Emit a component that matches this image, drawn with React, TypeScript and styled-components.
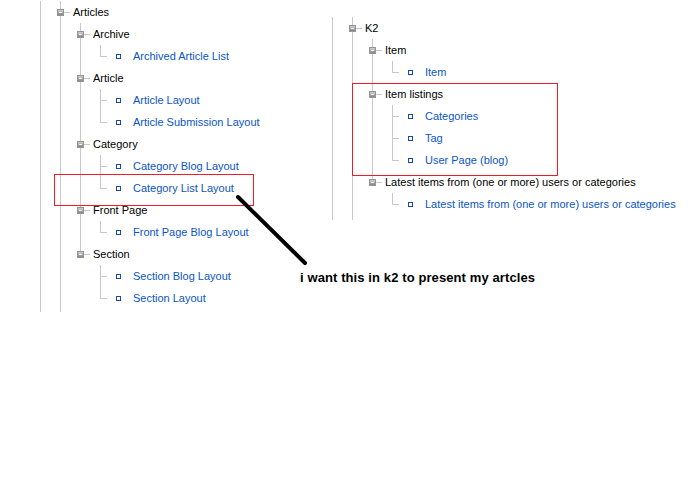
import React from "react";
import styled, { createGlobalStyle } from "styled-components";

type TreeNode = { label: string; children?: TreeNode[] };

const GlobalStyle = createGlobalStyle`
  html, body {
    margin: 0;
    padding: 0;
    background: #fff;
  }
  body {
    font-family: "Liberation Sans", Arial, sans-serif;
  }
`;

const leftTree: TreeNode = {
  label: "Articles",
  children: [
    { label: "Archive", children: [{ label: "Archived Article List" }] },
    {
      label: "Article",
      children: [{ label: "Article Layout" }, { label: "Article Submission Layout" }],
    },
    {
      label: "Category",
      children: [{ label: "Category Blog Layout" }, { label: "Category List Layout" }],
    },
    { label: "Front Page", children: [{ label: "Front Page Blog Layout" }] },
    {
      label: "Section",
      children: [{ label: "Section Blog Layout" }, { label: "Section Layout" }],
    },
  ],
};

const rightTree: TreeNode = {
  label: "K2",
  children: [
    { label: "Item", children: [{ label: "Item" }] },
    {
      label: "Item listings",
      children: [{ label: "Categories" }, { label: "Tag" }, { label: "User Page (blog)" }],
    },
    {
      label: "Latest items from (one or more) users or categories",
      children: [{ label: "Latest items from (one or more) users or categories" }],
    },
  ],
};

const LINE = "#c8c8c8";

const Page = styled.div`
  position: relative;
  width: 697px;
  height: 480px;
  overflow: hidden;
`;

const Columns = styled.div`
  display: flex;
  padding-top: 1px;
`;

const Column = styled.div<{ $width?: number; $top: number }>`
  display: flex;
  flex-direction: column;
  margin-top: ${(p) => p.$top}px;
  ${(p) => (p.$width ? `width: ${p.$width}px; padding-left: 30px; box-sizing: border-box;` : "")}
`;

const Row = styled.div<{ $h?: number }>`
  display: flex;
  align-items: center;
  height: ${(p) => p.$h ?? 22}px;
  font-size: 11px;
  white-space: nowrap;
`;

const Guide = styled.div<{ $on: boolean }>`
  position: relative;
  flex: 0 0 20px;
  align-self: stretch;

  &::before {
    content: "";
    display: ${(p) => (p.$on ? "block" : "none")};
    position: absolute;
    left: 10px;
    top: 0;
    bottom: 0;
    width: 1px;
    background: ${LINE};
  }
`;

const Joint = styled.div<{ $last: boolean }>`
  position: relative;
  flex: 0 0 20px;
  align-self: stretch;

  &::before {
    content: "";
    position: absolute;
    left: 10px;
    top: 0;
    height: 11px;
    width: 1px;
    background: ${LINE};
  }

  &::after {
    content: "";
    display: ${(p) => (p.$last ? "none" : "block")};
    position: absolute;
    left: 10px;
    top: 11px;
    bottom: 0;
    width: 1px;
    background: ${LINE};
  }
`;

const Expander = styled.span`
  position: absolute;
  left: 7px;
  top: 8px;
  width: 7px;
  height: 7px;
  box-sizing: border-box;
  z-index: 1;
  background: linear-gradient(#cfcfcf, #858585);
  border: 1px solid #949494;

  &::after {
    content: "";
    position: absolute;
    left: 1px;
    top: 2px;
    width: 3px;
    height: 1px;
    background: #f2f2f2;
  }
`;

const Dash = styled.span<{ $from: number; $len: number }>`
  position: absolute;
  left: ${(p) => p.$from}px;
  top: 11px;
  width: ${(p) => p.$len}px;
  height: 1px;
  background: ${LINE};
`;

const Heading = styled.span`
  margin-left: 3px;
  color: #000;
`;

const LeafIcon = styled.span`
  flex: 0 0 5px;
  width: 5px;
  height: 5px;
  margin-left: 6px;
  box-sizing: border-box;
  border: 1px solid #1848a8;
  background: #fff;
`;

const Link = styled.a`
  margin-left: 12px;
  color: #0b55c4;
  text-decoration: none;
`;

const RedBox = styled.div<{ $x: number; $y: number; $w: number; $h: number }>`
  position: absolute;
  left: ${(p) => p.$x}px;
  top: ${(p) => p.$y}px;
  width: ${(p) => p.$w}px;
  height: ${(p) => p.$h}px;
  border: 1px solid #ee1c24;
  box-sizing: border-box;
  pointer-events: none;
`;

const Arrow = styled.svg`
  position: absolute;
  left: 0;
  top: 0;
  pointer-events: none;
`;

const Note = styled.div`
  position: absolute;
  left: 300px;
  top: 270px;
  font-size: 13px;
  line-height: 16px;
  font-weight: bold;
  letter-spacing: 0.1px;
  color: #000;
  white-space: nowrap;
`;

function renderRows(node: TreeNode, guides: boolean[], last: boolean, key: string): React.ReactNode[] {
  const kids = node.children;
  const rows: React.ReactNode[] = [
    <Row key={key}>
      {guides.map((g, i) => (
        <Guide key={i} $on={g} />
      ))}
      {kids ? (
        <Joint $last={last}>
          <Expander />
          <Dash $from={14} $len={6} />
        </Joint>
      ) : (
        <Joint $last={last}>
          <Dash $from={10} $len={7} />
        </Joint>
      )}
      {kids ? (
        <Heading>{node.label}</Heading>
      ) : (
        <>
          <LeafIcon />
          <Link href="#">{node.label}</Link>
        </>
      )}
    </Row>,
  ];
  kids?.forEach((c, i) => {
    rows.push(...renderRows(c, [...guides, !last], i === kids.length - 1, `${key}-${i}`));
  });
  return rows;
}

const Tree = ({ root, tail }: { root: TreeNode; tail: number }) => (
  <>
    {renderRows(root, [true], false, "n")}
    <Row $h={tail}>
      <Guide $on />
      <Guide $on />
    </Row>
  </>
);

export default function App() {
  return (
    <Page>
      <GlobalStyle />
      <Columns>
        <Column $width={322} $top={0}>
          <Tree root={leftTree} tail={3} />
        </Column>
        <Column $top={16}>
          <Tree root={rightTree} tail={5} />
        </Column>
      </Columns>

      <RedBox $x={54} $y={174} $w={200} $h={32} />
      <RedBox $x={352} $y={83} $w={206} $h={93} />

      <Arrow width={697} height={480}>
        <line x1={238} y1={197} x2={305} y2={263} stroke="#000" strokeWidth={4} strokeLinecap="round" />
      </Arrow>

      <Note>i want this in k2 to present my artcles</Note>
    </Page>
  );
}
